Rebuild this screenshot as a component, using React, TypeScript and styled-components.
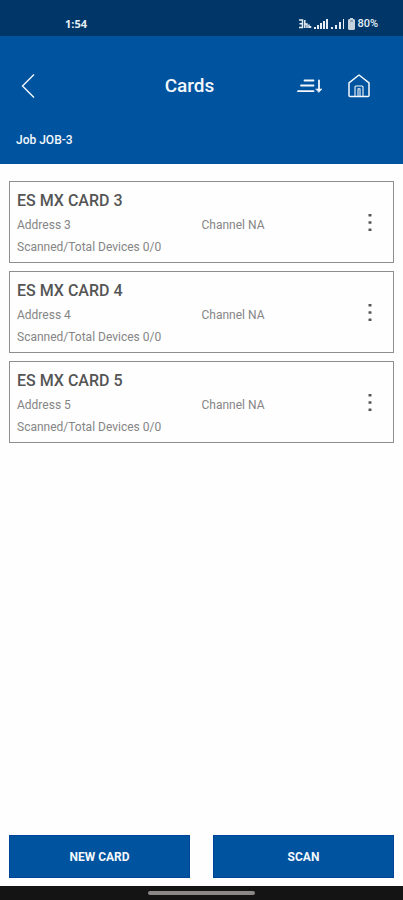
import React from "react";
import styled, { createGlobalStyle } from "styled-components";

const GlobalStyle = createGlobalStyle`
  *, *::before, *::after { box-sizing: border-box; }
  body {
    margin: 0;
    background: #fefefe;
    font-family: Roboto, "Liberation Sans", sans-serif;
  }
  button { font: inherit; }
`;

const Screen = styled.div`
  display: flex;
  flex-direction: column;
  min-height: 100vh;
`;

const StatusBar = styled.div`
  display: flex;
  align-items: center;
  justify-content: space-between;
  height: 36px;
  padding: 12px 25px 0 65px;
  background: #003768;
  color: #e6eef5;
  font-family: "Open Sans", Roboto, sans-serif;
  font-size: 11px;
  line-height: 16px;
  font-weight: 700;
`;

const StatusIcons = styled.div`
  display: flex;
  align-items: center;
  gap: 2px;
  font-family: Roboto, sans-serif;
  font-weight: 500;
`;

const Header = styled.header`
  height: 128px;
  padding-top: 4px;
  background: #00539f;
  color: #f4f8fc;
`;

const TitleRow = styled.div`
  display: grid;
  grid-template-columns: 140px 1fr 152px;
  align-items: center;
  height: 92px;
  padding-right: 12px;
`;

const BackSlot = styled.div`
  padding-left: 12px;
`;

const Title = styled.h1`
  margin: 0;
  font-size: 19px;
  line-height: 24px;
  font-weight: 500;
  text-align: center;
`;

const Actions = styled.div`
  display: flex;
  justify-content: flex-end;
  gap: 18px;
  padding-right: 16px;
`;

const IconButton = styled.button`
  display: grid;
  place-items: center;
  width: 32px;
  height: 32px;
  padding: 0;
  border: 0;
  background: none;
  color: inherit;
`;

const JobName = styled.p`
  margin: 0;
  padding: 0 16px;
  font-size: 12px;
  line-height: 16px;
  font-weight: 500;
`;

const CardList = styled.ul`
  display: flex;
  flex: 1;
  flex-direction: column;
  gap: 8px;
  margin: 0;
  padding: 17px 9px;
  list-style: none;
`;

const CardItem = styled.li`
  display: flex;
  align-items: center;
  height: 82px;
  padding: 2px 7px 0;
  border: 1px solid #8e8e8e;
`;

const CardBody = styled.div`
  flex: 1;
`;

const CardTitle = styled.h2`
  margin: 0;
  color: #555;
  font-size: 16px;
  line-height: 26px;
  font-weight: 500;
`;

const CardFields = styled.div`
  display: grid;
  grid-template-columns: 1fr 1fr;
  margin-right: -32px;
`;

const Field = styled.p`
  margin: 0;
  color: #858585;
  font-size: 12px;
  line-height: 22px;
`;

const Footer = styled.footer`
  display: grid;
  grid-template-columns: 1fr 1fr;
  gap: 23px;
  padding: 0 9px 8px;
`;

const ActionButton = styled.button`
  height: 43px;
  padding: 0;
  border: 1px solid #00449a;
  background: #00539f;
  color: #f4f8fc;
  font-size: 12px;
  font-weight: 700;
`;

const NavigationBar = styled.div`
  display: flex;
  justify-content: center;
  height: 14px;
  padding-top: 5px;
  background: #141414;
`;

const HomeHandle = styled.div`
  width: 107px;
  height: 4px;
  border-radius: 2px;
  background: #8c8888;
`;

const NetworkIcon = () => (
  <svg width="14" height="10" viewBox="0 0 14 10" fill="none" stroke="currentColor" strokeWidth="1.5" aria-hidden="true">
    <path d="M1 1h3.5v7.5H1M1.5 4.7h3M6.8 1v8M7 5h2v4M11 5.5v3.5M12.5 7v2" />
  </svg>
);

const SignalIcon = ({ strong = false }: { strong?: boolean }) => (
  <svg width="15" height="10" viewBox="0 0 15 10" fill="currentColor" aria-hidden="true">
    <path d={strong
      ? "M0 8h2v2H0zM3 6h2v4H3zM6 4h2v6H6zM9 2h2v8H9zM12 0h2v10h-2z"
      : "M0 8h2v2H0zM4 6h2v4H4zM8 3h2v7H8zM12 0h1v10h-1z"} />
  </svg>
);

const BatteryIcon = () => (
  <svg width="7" height="12" viewBox="0 0 7 12" aria-hidden="true">
    <path d="M2 0h3v1h1l1 1v9l-1 1H1l-1-1V2l1-1h1z" fill="#c6d3dd" />
    <path d="M2 3h3" stroke="#557996" />
  </svg>
);

const BackIcon = () => (
  <svg width="32" height="32" viewBox="0 0 32 32" fill="none" stroke="currentColor" strokeWidth="1.4" aria-hidden="true">
    <path d="M22 4.5L10.5 16 22 27.5" />
  </svg>
);

const SortIcon = () => (
  <svg width="32" height="32" viewBox="0 0 32 32" fill="none" stroke="currentColor" strokeWidth="1.8" strokeLinecap="round" aria-hidden="true">
    <path d="M11.5 10.5H20.5M8 15.5H20.5M5 21.2H20.5M26 10.5V20" />
    <path d="M23 19h6l-3 3.2z" fill="currentColor" strokeWidth="0.6" />
  </svg>
);

const HomeIcon = () => (
  <svg width="32" height="32" viewBox="0 0 32 32" fill="none" stroke="currentColor" strokeWidth="1.5" strokeLinejoin="round" aria-hidden="true">
    <path d="M6 12.8L16 5l10 7.8V25.5q0 1-1 1H7q-1 0-1-1z" />
    <path d="M12 26V17q0-1 1-1h6q1 0 1 1v9M15 26v-7.2h2V26" strokeWidth="1.1" />
  </svg>
);

const MoreIcon = () => (
  <svg width="32" height="32" viewBox="0 0 32 32" fill="#555" aria-hidden="true">
    <rect x="14.5" y="7" width="3" height="2.5" rx="0.5" />
    <rect x="14.5" y="14.3" width="3" height="2.5" rx="0.5" />
    <rect x="14.5" y="21.5" width="3" height="2.5" rx="0.5" />
  </svg>
);

const cards = [3, 4, 5];

export default function App() {
  return (
    <Screen>
      <GlobalStyle />
      <StatusBar>
        <span>1:54</span>
        <StatusIcons>
          <NetworkIcon />
          <SignalIcon strong />
          <SignalIcon />
          <BatteryIcon />
          <span>80%</span>
        </StatusIcons>
      </StatusBar>
      <Header>
        <TitleRow>
          <BackSlot>
            <IconButton type="button" aria-label="Back"><BackIcon /></IconButton>
          </BackSlot>
          <Title>Cards</Title>
          <Actions>
            <IconButton type="button" aria-label="Sort"><SortIcon /></IconButton>
            <IconButton type="button" aria-label="Home"><HomeIcon /></IconButton>
          </Actions>
        </TitleRow>
        <JobName>Job JOB-3</JobName>
      </Header>
      <CardList>
        {cards.map((number) => (
          <CardItem key={number}>
            <CardBody>
              <CardTitle>ES MX CARD {number}</CardTitle>
              <CardFields>
                <Field>Address {number}</Field>
                <Field>Channel NA</Field>
              </CardFields>
              <Field>Scanned/Total Devices 0/0</Field>
            </CardBody>
            <IconButton type="button" aria-label={`Options for card ${number}`}><MoreIcon /></IconButton>
          </CardItem>
        ))}
      </CardList>
      <Footer>
        <ActionButton type="button">NEW CARD</ActionButton>
        <ActionButton type="button">SCAN</ActionButton>
      </Footer>
      <NavigationBar><HomeHandle /></NavigationBar>
    </Screen>
  );
}
